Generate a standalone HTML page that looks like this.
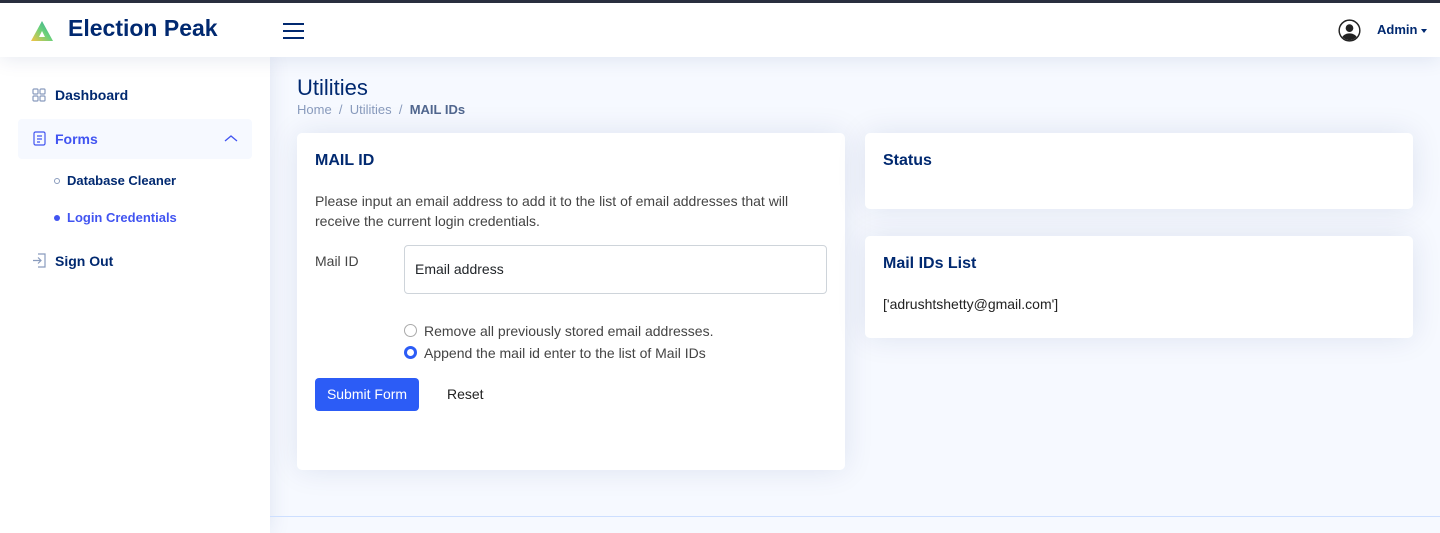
<!DOCTYPE html>
<html><head><meta charset="utf-8"><style>
*{box-sizing:border-box;margin:0;padding:0}
body{width:1440px;height:533px;overflow:hidden;background:#f6f9ff;font-family:"Liberation Sans",sans-serif;position:relative}
.topbar{position:absolute;left:0;top:0;width:1440px;height:3px;background:#2b2f3e}
.header{position:absolute;left:0;top:3px;width:1440px;height:54px;background:#fff;box-shadow:0 2px 20px rgba(1,41,112,.1);z-index:2}
.brand{position:absolute;left:68px;top:12px;font-size:23px;font-weight:700;color:#012970}
.side{position:absolute;left:0;top:57px;width:270px;height:476px;background:#fff;box-shadow:0 0 20px rgba(1,41,112,.1)}
.nav{position:absolute;font-size:14px;font-weight:700;color:#012970}
.main{position:absolute;left:270px;top:57px;right:0;bottom:0}
.card{position:absolute;background:#fff;border-radius:5px;box-shadow:0 0 30px rgba(1,41,112,.1)}
.ct{position:absolute;font-size:16px;font-weight:700;color:#012970}
.txt{position:absolute;font-size:14px;color:#444;line-height:20px}
</style></head><body>
<div class="topbar"></div>
<div class="header">
<svg style="position:absolute;left:30px;top:17px" width="24" height="22" viewBox="0 0 24 22"><defs><linearGradient id="g" x1="0" y1="1" x2="1" y2="0"><stop offset="0" stop-color="#f6c343"/><stop offset=".5" stop-color="#6cd17a"/><stop offset="1" stop-color="#2aa39b"/></linearGradient></defs><path d="M12 1 L23 21 L1 21 Z M12 11 L9 17 L15 17 Z" fill="url(#g)" fill-rule="evenodd"/></svg>
<div class="brand">Election Peak</div>
<svg style="position:absolute;left:283px;top:19px" width="21" height="18"><path d="M0 2h21M0 9h21M0 16h21" stroke="#012970" stroke-width="2"/></svg>
<svg style="position:absolute;left:1338px;top:16px" width="23" height="23" viewBox="0 0 24 24"><defs><clipPath id="c"><circle cx="12" cy="12" r="10"/></clipPath></defs><circle cx="12" cy="12" r="10.8" fill="none" stroke="#222" stroke-width="1.5"/><g clip-path="url(#c)" fill="#222"><circle cx="12" cy="9.5" r="4"/><ellipse cx="12" cy="21" rx="8" ry="6"/></g></svg>
<div style="position:absolute;left:1377px;top:19px;font-size:13px;font-weight:700;color:#012970">Admin <span style="display:inline-block;width:0;height:0;border-left:3px solid transparent;border-right:3px solid transparent;border-top:4px solid #012970;vertical-align:middle"></span></div>
</div>
<div class="side">
<svg style="position:absolute;left:32px;top:31px" width="14" height="14"><g fill="none" stroke="#899bbd" stroke-width="1.2"><rect x="1" y="1" width="5" height="5" rx="1"/><rect x="8" y="1" width="5" height="5" rx="1"/><rect x="1" y="8" width="5" height="5" rx="1"/><rect x="8" y="8" width="5" height="5" rx="1"/></g></svg>
<div class="nav" style="left:55px;top:30px">Dashboard</div>
<div style="position:absolute;left:18px;top:62px;width:234px;height:40px;background:#f6f9ff;border-radius:4px"></div>
<svg style="position:absolute;left:32px;top:74px" width="14" height="15"><rect x="2" y="1" width="11" height="13" rx="1.5" fill="none" stroke="#4154f1" stroke-width="1.2"/><path d="M5 5h5M5 8h5M5 11h3" stroke="#4154f1" stroke-width="1.2"/></svg>
<div class="nav" style="left:55px;top:74px;color:#4154f1">Forms</div>
<svg style="position:absolute;left:224px;top:77px" width="14" height="9"><path d="M1 7l6-5 6 5" fill="none" stroke="#4154f1" stroke-width="1.3"/></svg>
<div style="position:absolute;left:54px;top:121px;width:6px;height:6px;border:1px solid #899bbd;border-radius:50%"></div>
<div class="nav" style="left:67px;top:116px;font-size:13px">Database Cleaner</div>
<div style="position:absolute;left:54px;top:158px;width:6px;height:6px;background:#4154f1;border-radius:50%"></div>
<div class="nav" style="left:67px;top:153px;font-size:13px;color:#4154f1">Login Credentials</div>
<svg style="position:absolute;left:32px;top:196px" width="15" height="15"><path d="M6 1h7v13H6M1 7.5h8M6 4.5l3 3-3 3" fill="none" stroke="#899bbd" stroke-width="1.2"/></svg>
<div class="nav" style="left:55px;top:196px">Sign Out</div>
</div>
<div class="main">
<div style="position:absolute;left:27px;top:18px;font-size:22px;color:#012970;font-weight:500">Utilities</div>
<div style="position:absolute;left:27px;top:45px;font-size:13px;color:#899bbd">Home &nbsp;/&nbsp; Utilities &nbsp;/&nbsp; <span style="color:#51678f;font-weight:700">MAIL IDs</span></div>
<div class="card" style="left:27px;top:76px;width:548px;height:337px">
<div class="ct" style="left:18px;top:19px">MAIL ID</div>
<div class="txt" style="left:18px;top:58px;width:510px">Please input an email address to add it to the list of email addresses that will receive the current login credentials.</div>
<div class="txt" style="left:18px;top:118px">Mail ID</div>
<div style="position:absolute;left:107px;top:112px;width:423px;height:49px;border:1px solid #ced4da;border-radius:4px;font-size:14px;color:#212529;padding:15px 10px">Email address</div>
<div style="position:absolute;left:107px;top:191px;width:13px;height:13px;border:1px solid #aaa;border-radius:50%"></div>
<div class="txt" style="left:127px;top:188px">Remove all previously stored email addresses.</div>
<div style="position:absolute;left:107px;top:213px;width:13px;height:13px;border:3.5px solid #2c5cf6;border-radius:50%;background:#fff"></div>
<div class="txt" style="left:127px;top:210px">Append the mail id enter to the list of Mail IDs</div>
<div style="position:absolute;left:18px;top:245px;width:104px;height:33px;background:#2c5cf6;border-radius:4px;color:#fff;font-size:14px;text-align:center;line-height:33px">Submit Form</div>
<div class="txt" style="left:150px;top:251px;color:#222">Reset</div>
</div>
<div class="card" style="left:595px;top:76px;width:548px;height:76px"><div class="ct" style="left:18px;top:19px">Status</div></div>
<div class="card" style="left:595px;top:179px;width:548px;height:102px"><div class="ct" style="left:18px;top:19px">Mail IDs List</div><div class="txt" style="left:18px;top:58px;color:#222">['adrushtshetty@gmail.com']</div></div>
<div style="position:absolute;left:0;right:0;top:459px;border-top:1px solid #cddfff"></div>
</div>
</body></html>
